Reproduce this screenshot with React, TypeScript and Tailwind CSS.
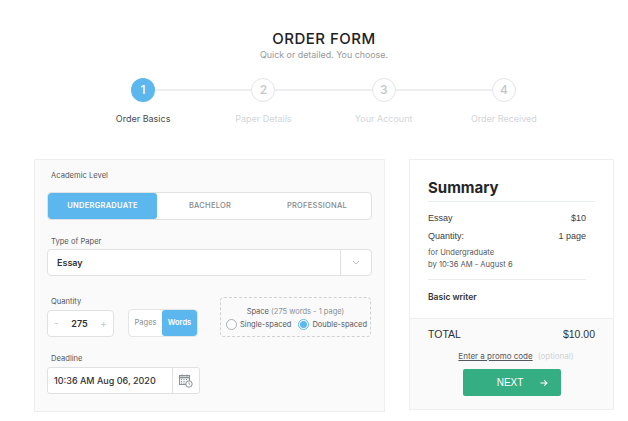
import React from "react";

const arial = { fontFamily: '"Liberation Sans", Arial, sans-serif' };

function Step({ n, active }: { n: number; active?: boolean }) {
  return (
    <div
      className={
        active
          ? "flex h-[24px] w-[24px] shrink-0 items-center justify-center rounded-full bg-[#5cb7ee] text-[12px] font-medium text-white"
          : "flex h-[24px] w-[24px] shrink-0 items-center justify-center rounded-full border border-[#e2e4e7] bg-white text-[12px] font-medium text-[#c2c6cb]"
      }
    >
      {n}
    </div>
  );
}

function Line() {
  return <div className="h-[2px] flex-1 bg-[#eceef0]" />;
}

function Label({ children }: { children: React.ReactNode }) {
  return <div className="text-[7.6px] leading-[10px] text-[#55585c]">{children}</div>;
}

function CalendarIcon() {
  return (
    <svg width="14" height="14" viewBox="0 0 14 14" fill="none" stroke="#8b9096" strokeWidth="1">
      <rect x="0.5" y="1.5" width="10" height="9" fill="#f4f5f6" />
      <path d="M0.5 3.5h10" strokeWidth="1.6" />
      <path d="M3 0.5v2M8 0.5v2" />
      <path d="M2 5.5h1M4.5 5.5h1M7 5.5h1M2 7.5h1M4.5 7.5h1M2 9.2h1M4.5 9.2h1" />
      <circle cx="10" cy="10" r="3.2" fill="#fff" />
      <path d="M10 8.3V10l1.2.7" strokeWidth="0.8" />
    </svg>
  );
}

export default function App() {
  return (
    <div
      className="h-[421px] w-[628px] overflow-hidden bg-white"
      style={{ fontFamily: 'Inter, "Noto Sans", sans-serif' }}
    >
      <div className="pl-[20px] pt-[30px] text-center text-[15px] font-medium leading-[18px] tracking-[0.5px] text-[#1f2124]">
        ORDER FORM
      </div>
      <div className="mt-[1px] pl-[20px] text-center text-[8.9px] leading-[12px] text-[#96999d]">
        Quick or detailed. You choose.
      </div>

      <div className="ml-[131px] mr-[112px] mt-[17px] flex items-center">
        <Step n={1} active />
        <Line />
        <Step n={2} />
        <Line />
        <Step n={3} />
        <Line />
        <Step n={4} />
      </div>
      <div className="ml-[83px] mr-[64px] mt-[11px] grid grid-cols-4 text-center text-[9px] leading-[12px] text-[#d3d5d8]">
        <div className="text-[#4a4c50]">Order Basics</div>
        <div>Paper Details</div>
        <div>Your Account</div>
        <div>Order Received</div>
      </div>

      <div className="mt-[34px] flex items-start pl-[34px]">
        {/* left panel */}
        <div className="h-[253px] w-[351px] border border-[#eeeeee] bg-[#fafafa] pl-[12px] pr-[12px] pt-[11px]">
          <div className="pl-[4px]">
            <Label>Academic Level</Label>
          </div>
          <div className="mt-[11px] flex h-[28px] w-[325px] overflow-hidden rounded-[4px] border border-[#dfe1e3] bg-white text-[7.5px] font-medium tracking-[0.25px] text-[#85898e]">
            <div className="flex w-[109px] items-center justify-center rounded-[3px] bg-[#5cb7ee] font-semibold text-white">
              UNDERGRADUATE
            </div>
            <div className="flex w-[106px] items-center justify-center">BACHELOR</div>
            <div className="flex flex-1 items-center justify-center">PROFESSIONAL</div>
          </div>

          <div className="mt-[17px] pl-[4px]">
            <Label>Type of Paper</Label>
          </div>
          <div className="mt-[2px] flex h-[27px] w-[325px] items-center rounded-[4px] border border-[#dfe1e3] bg-white">
            <div className="flex-1 pl-[9px] text-[9px] font-semibold text-[#303236]">Essay</div>
            <div className="flex h-full w-[31px] items-center justify-center border-l border-[#dfe1e3]">
              <svg width="8" height="5" viewBox="0 0 8 5" fill="none" stroke="#a9adb1" strokeWidth="0.8">
                <path d="M1 1l3 3 3-3" />
              </svg>
            </div>
          </div>

          <div className="mt-[21px] flex items-end">
            <div className="w-[81px]">
              <div className="pl-[4px]">
                <Label>Quantity</Label>
              </div>
              <div className="mt-[3px] flex h-[27px] w-[67px] items-center justify-between rounded-[4px] border border-[#dfe1e3] bg-white px-[6px] text-[10px] text-[#c2c6ca]">
                <span>-</span>
                <span className="text-[9px] font-semibold text-[#303236]">275</span>
                <span>+</span>
              </div>
            </div>
            <div className="flex h-[28px] w-[70px] overflow-hidden rounded-[4px] border border-[#e3e5e7] bg-white text-[7.5px]">
              <div className="flex flex-1 items-center justify-center text-[#8b8f94]">Pages</div>
              <div className="flex w-[35px] items-center justify-center rounded-[3px] bg-[#5cb7ee] font-semibold text-white">
                Words
              </div>
            </div>
            <div className="ml-[22px] h-[40px] w-[151px] rounded-[4px] border border-dashed border-[#cfd2d5] pt-[9px]">
              <div className="text-center text-[7.5px] leading-[10px] text-[#55585c]">
                Space <span className="text-[#8b8f94]">(275 words - 1 page)</span>
              </div>
              <div className="mt-[2px] flex items-center pl-[5px] text-[7.5px] text-[#55585c]">
                <span className="h-[11px] w-[11px] rounded-full border border-[#a9adb1] bg-white" />
                <span className="ml-[3px]">Single-spaced</span>
                <span className="ml-[7px] flex h-[11px] w-[11px] items-center justify-center rounded-full border border-[#5cb7ee] bg-white">
                  <span className="h-[7px] w-[7px] rounded-full bg-[#5cb7ee]" />
                </span>
                <span className="ml-[3px]">Double-spaced</span>
              </div>
            </div>
          </div>

          <div className="mt-[17px] pl-[4px]">
            <Label>Deadline</Label>
          </div>
          <div className="mt-[3px] flex h-[27px] w-[153px] items-center rounded-[3px] border border-[#dfe1e3] bg-white">
            <div className="flex-1 pl-[6px] text-[9px] font-medium text-[#303236]">
              10:36 AM Aug 06, 2020
            </div>
            <div className="flex h-full w-[27px] items-center justify-center border-l border-[#dfe1e3]">
              <CalendarIcon />
            </div>
          </div>
        </div>

        {/* right panel */}
        <div className="ml-[24px] flex h-[251px] w-[205px] flex-col border border-[#eeeeee] bg-white">
          <div className="flex-1 pl-[18px] pr-[18px]">
            <div className="mt-[19px] border-b border-[#e9eeee] pb-[4px] text-[15px] font-bold leading-[18px] text-[#24262a]">
              Summary
            </div>
            <div className="pr-[9px]">
              <div className="mt-[10px] flex justify-between text-[9px] leading-[12px] text-[#3c3e42]" style={arial}>
                <span>Essay</span>
                <span>$10</span>
              </div>
              <div className="mt-[6px] flex justify-between text-[9px] leading-[12px] text-[#3c3e42]" style={arial}>
                <span>Quantity:</span>
                <span>1 page</span>
              </div>
              <div className="mt-[5px] text-[7.6px] leading-[12px] text-[#55585c]">
                for Undergraduate
                <br />
                by 10:36 AM - August 6
              </div>
              <div className="mt-[8px] border-t border-[#e9ebed] pt-[12px] text-[8.5px] font-semibold leading-[10px] text-[#303236]">
                Basic writer
              </div>
            </div>
          </div>
          <div className="h-[91px] border-t border-[#eeeeee] bg-[#fafafa] px-[18px] pt-[8px]">
            <div className="flex justify-between text-[10.5px] leading-[14px] text-[#303236]" style={arial}>
              <span>TOTAL</span>
              <span>$10.00</span>
            </div>
            <div className="mt-[10px] pl-[9px] text-center text-[8px] leading-[10px]">
              <span className="text-[#55585c] underline">Enter a promo code</span>
              <span className="ml-[5px] text-[#d0d3d6]">(optional)</span>
            </div>
            <div
              className="mx-auto mt-[8px] flex h-[27px] w-[98px] items-center justify-center gap-[17px] rounded-[2px] bg-[#36ae84] pl-[22px] text-[10px] text-white"
              style={arial}
            >
              <span>NEXT</span>
              <svg width="8" height="8" viewBox="0 0 9 8" fill="none" stroke="#fff" strokeWidth="1.3">
                <path d="M0.5 4h7M4.8 1l3 3-3 3" />
              </svg>
            </div>
          </div>
        </div>
      </div>
    </div>
  );
}
